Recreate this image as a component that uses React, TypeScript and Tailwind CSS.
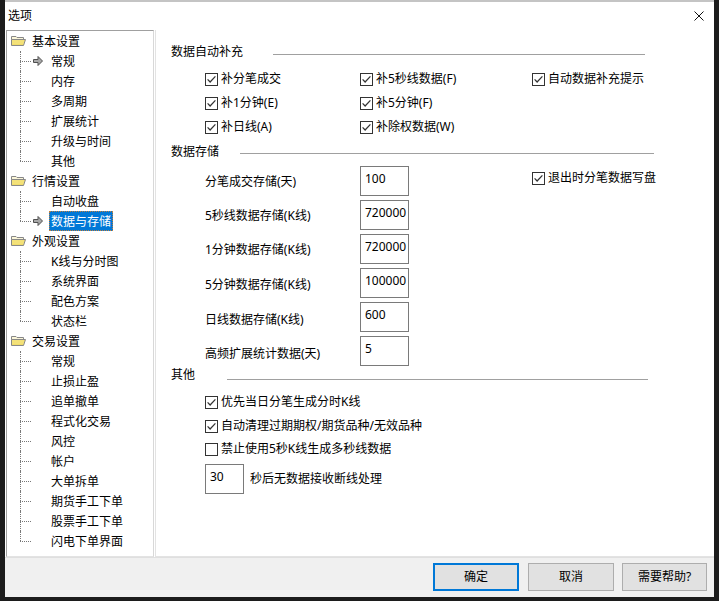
import React from "react";

const Cb = ({ checked = true }: { checked?: boolean }) => (
  <svg width="13" height="13" viewBox="0 0 13 13" className="shrink-0">
    <rect x="0.5" y="0.5" width="12" height="12" fill="#fff" stroke="#333" />
    {checked && (
      <polyline points="2.6,6.4 5.1,9 10.4,3.4" fill="none" stroke="#333" strokeWidth="1.25" />
    )}
  </svg>
);

const CheckItem = ({ label, checked = true }: { label: string; checked?: boolean }) => (
  <div className="flex h-4 items-center whitespace-nowrap">
    <Cb checked={checked} />
    <span className="ml-[3px]">{label}</span>
  </div>
);

const Folder = () => (
  <svg width="15" height="12" viewBox="0 0 15 12" className="shrink-0">
    <path d="M0.5 1.5 H5 L6 2.5 H12.5 V4.5 H0.5 Z" fill="#fbf6d8" stroke="#888" />
    <path d="M0.5 4.5 H14.5 L12.5 10.5 H0.5 Z" fill="#f0dc6a" stroke="#888" />
    <path d="M1.5 6 H13 M1.5 8 H12.5" stroke="#fff3a8" strokeWidth="1" strokeDasharray="1 1" />
  </svg>
);

const Arrow = () => (
  <svg width="10" height="10" viewBox="0 0 10 10" className="shrink-0">
    <polygon points="0.5,3.5 5,3.5 5,0.5 9.5,5 5,9.5 5,6.5 0.5,6.5" fill="#a8a8a8" stroke="#505050" />
  </svg>
);

type Group = { name: string; items: string[]; arrow?: number; selected?: number };

const groups: Group[] = [
  { name: "基本设置", items: ["常规", "内存", "多周期", "扩展统计", "升级与时间", "其他"], arrow: 0 },
  { name: "行情设置", items: ["自动收盘", "数据与存储"], arrow: 1, selected: 1 },
  { name: "外观设置", items: ["K线与分时图", "系统界面", "配色方案", "状态栏"] },
  {
    name: "交易设置",
    items: ["常规", "止损止盈", "追单撤单", "程式化交易", "风控", "帐户", "大单拆单", "期货手工下单", "股票手工下单", "闪电下单界面"],
  },
];

const Tree = () => (
  <div className="ml-px flex h-[527px] w-[148px] flex-col border-t border-l border-t-[#a0a0a0] border-l-[#a0a0a0] border-r border-b border-r-[#d8d8d8] border-b-[#e3e3e3] bg-white">
    {groups.map((g) => (
      <React.Fragment key={g.name}>
        <div className="flex h-5 items-center whitespace-nowrap">
          <div className="w-[4px]" />
          <Folder />
          <span className="ml-[6px] pt-[2px]">{g.name}</span>
        </div>
        {g.items.map((it, i) => {
          const last = i === g.items.length - 1;
          const sel = g.selected === i;
          return (
            <div key={g.name + it} className="flex h-5 items-stretch whitespace-nowrap">
              <div className="w-[13px] shrink-0" />
              <div className="flex w-[11px] shrink-0 flex-col">
                <div className="h-[10px] border-l border-dotted border-[#777]" />
                <div
                  className={
                    "h-[10px] border-t border-dotted border-[#777] " +
                    (last ? "border-l-0" : "border-l")
                  }
                />
              </div>
              <div className="w-[2px] shrink-0" />
              <div className="flex w-[10px] shrink-0 items-center">{g.arrow === i && <Arrow />}</div>
              <div className="w-[6px] shrink-0" />
              <div
                className={
                  "flex items-center px-[2px] pt-[2px] " +
                  (sel ? "border border-dotted border-[#c08040] bg-[#0078d7] px-px pt-px text-white" : "")
                }
              >
                {it}
              </div>
            </div>
          );
        })}
      </React.Fragment>
    ))}
  </div>
);

const Box = ({ v, w }: { v: string; w: string }) => (
  <div className={"h-[30px] shrink-0 border border-[#7a7a7a] bg-white pl-[4px] pt-[4px] " + w}>{v}</div>
);

const storage: [string, string, string][] = [
  ["分笔成交存储(天)", "100", "mt-[8px]"],
  ["5秒线数据存储(K线)", "720000", "mt-[8px]"],
  ["1分钟数据存储(K线)", "720000", "mt-[8px]"],
  ["5分钟数据存储(K线)", "100000", "mt-[9px]"],
  ["日线数据存储(K线)", "600", "mt-[10px]"],
  ["高频扩展统计数据(天)", "5", "mt-[10px]"],
];

export default function App() {
  return (
    <div className="flex h-[601px] w-[719px] flex-col bg-[#1c1c1c] px-[5px] pb-[4px] font-['Noto_Sans','Noto_Sans_CJK_SC',sans-serif] text-[12px] leading-4 text-black">
      <div className="flex flex-1 flex-col border-t-2 border-[#c4c4c4] bg-white">
        {/* title */}
        <div className="flex h-[28px] items-center justify-between pl-[3px] pr-[10px]">
          <span>选项</span>
          <svg width="10" height="10" viewBox="0 0 10 10">
            <path d="M0.5 0.5 L9.5 9.5 M9.5 0.5 L0.5 9.5" stroke="#111" strokeWidth="1" />
          </svg>
        </div>
        {/* body */}
        <div className="flex h-[527px] gap-px">
          <Tree />
          <div className="flex flex-1 flex-col border-l border-b border-[#e3e3e3] pl-[15px]">
            <div className="mt-[14px] flex h-4 items-start whitespace-nowrap">
              <span>数据自动补充</span>
              <div className="ml-[30px] mt-[10px] h-px w-[372px] bg-[#a0a0a0]" />
            </div>
            <div className="ml-[34px] mt-[11px] flex flex-col gap-2">
              <div className="flex">
                <div className="w-[155px]"><CheckItem label="补分笔成交" /></div>
                <div className="w-[172px]"><CheckItem label="补5秒线数据(F)" /></div>
                <CheckItem label="自动数据补充提示" />
              </div>
              <div className="flex">
                <div className="w-[155px]"><CheckItem label="补1分钟(E)" /></div>
                <div className="w-[172px]"><CheckItem label="补5分钟(F)" /></div>
              </div>
              <div className="flex">
                <div className="w-[155px]"><CheckItem label="补日线(A)" /></div>
                <div className="w-[172px]"><CheckItem label="补除权数据(W)" /></div>
              </div>
            </div>
            <div className="mt-[9px] flex h-4 items-start whitespace-nowrap">
              <span>数据存储</span>
              <div className="ml-[21px] mt-[9px] h-px w-[414px] bg-[#a0a0a0]" />
            </div>
            <div className="ml-[34px] mt-[6px] flex flex-col gap-[4px]">
              {storage.map(([l, v, m], i) => (
                <div key={l} className="flex h-[30px] items-start">
                  <div className={"w-[155px] whitespace-nowrap " + m}>{l}</div>
                  <Box v={v} w="w-[49px]" />
                  {i === 0 && (
                    <div className="ml-[123px] mt-[4px]">
                      <CheckItem label="退出时分笔数据写盘" />
                    </div>
                  )}
                </div>
              ))}
            </div>
            <div className="mt-px flex h-4 items-start whitespace-nowrap">
              <span>其他</span>
              <div className="ml-[32px] mt-[12px] h-px w-[421px] bg-[#a0a0a0]" />
            </div>
            <div className="ml-[34px] mt-[11px] flex flex-col">
              <CheckItem label="优先当日分笔生成分时K线" />
              <div className="mt-[8px]"><CheckItem label="自动清理过期期权/期货品种/无效品种" /></div>
              <div className="mt-[7px]"><CheckItem label="禁止使用5秒K线生成多秒线数据" checked={false} /></div>
            </div>
            <div className="ml-[34px] mt-[7px] flex items-center">
              <Box v="30" w="w-[39px]" />
              <span className="ml-[6px] whitespace-nowrap">秒后无数据接收断线处理</span>
            </div>
          </div>
        </div>
        {/* bottom */}
        <div className="flex h-[40px] items-start justify-end border-t border-[#dfdfdf] bg-[#f0f0f0] pr-[7px] pt-[5px]">
          <button className="h-[28px] w-[86px] border-2 border-[#0078d7] bg-[#e1e1e1]">确定</button>
          <button className="ml-[9px] h-[28px] w-[86px] border border-[#adadad] bg-[#e1e1e1]">取消</button>
          <button className="ml-[8px] h-[28px] w-[85px] border border-[#adadad] bg-[#e1e1e1]">需要帮助?</button>
        </div>
      </div>
    </div>
  );
}
